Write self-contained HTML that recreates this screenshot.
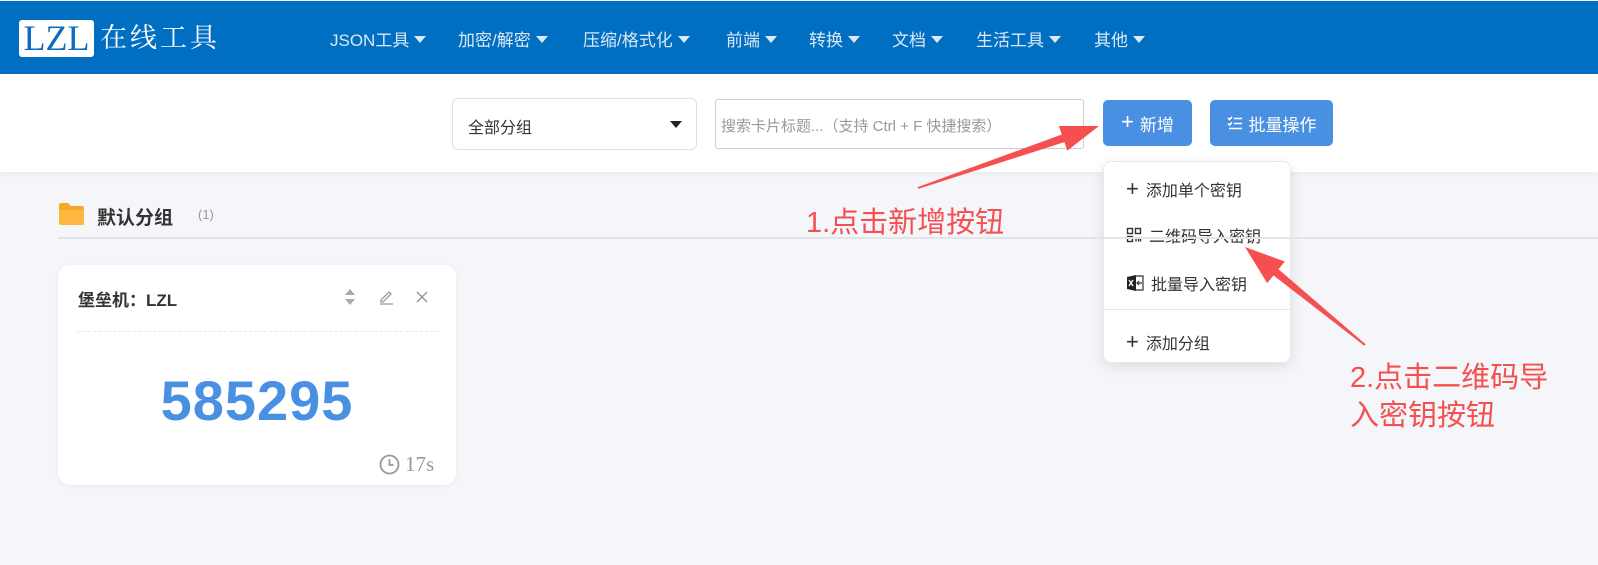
<!DOCTYPE html>
<html><head><meta charset="utf-8"><style>
*{margin:0;padding:0;box-sizing:border-box}
body{width:1598px;height:565px;overflow:hidden;background:#f5f6fa;font-family:"Liberation Sans","Noto Sans CJK SC",sans-serif;position:relative}
.abs{position:absolute}
.hdr{left:0;top:1px;width:1598px;height:73px;background:#006fc1}
.nav{top:26px;font-size:17px;color:#dce8f6;white-space:nowrap}
.nav i{display:inline-block;width:0;height:0;border-left:6px solid transparent;border-right:6px solid transparent;border-top:7px solid #dce8f6;margin-left:5px;vertical-align:3px}
.bar{left:0;top:74px;width:1598px;height:98px;background:#fff;box-shadow:0 2px 6px rgba(0,0,0,.05)}
.btn{background:#4a90e2;color:#fff;border-radius:5px;font-size:17px;display:flex;align-items:center;justify-content:center;gap:6px}
.dd{left:1103px;top:161px;width:188px;height:202px;background:#fff;border-radius:8px;box-shadow:0 4px 14px rgba(0,0,0,.1);border:1px solid #e8e8ec}
.it{left:22px;font-size:16px;color:#333;display:flex;align-items:center;gap:7px;white-space:nowrap}
.red{color:#f5504f;font-size:29px;white-space:nowrap}
</style></head><body>
<div class="abs hdr"></div>
<div class="abs" style="left:19px;top:20px;width:75px;height:37px;background:#fff;border-radius:3px;color:#0a6cbf;font:36px/37px 'Liberation Serif',serif;text-align:center">LZL</div>
<div class="abs" style="left:100px;top:22px;color:#fff;font:27px/32px 'Liberation Serif','Noto Serif CJK SC',serif;letter-spacing:3px">在线工具</div>
<div class="abs nav" style="left:330px">JSON工具<i></i></div>
<div class="abs nav" style="left:458px">加密/解密<i></i></div>
<div class="abs nav" style="left:583px">压缩/格式化<i></i></div>
<div class="abs nav" style="left:726px">前端<i></i></div>
<div class="abs nav" style="left:809px">转换<i></i></div>
<div class="abs nav" style="left:892px">文档<i></i></div>
<div class="abs nav" style="left:976px">生活工具<i></i></div>
<div class="abs nav" style="left:1094px">其他<i></i></div>

<div class="abs bar"></div>
<div class="abs" style="left:452px;top:98px;width:245px;height:52px;border:1px solid #e0e0e0;border-radius:6px;background:#fff;font-size:16px;color:#333;padding:15px 0 0 15px">全部分组
<span class="abs" style="right:14px;top:22px;width:0;height:0;border-left:6px solid transparent;border-right:6px solid transparent;border-top:7px solid #222"></span></div>
<div class="abs" style="left:715px;top:99px;width:369px;height:50px;border:1px solid #ccc;border-radius:3px;background:#fff;font-size:15px;color:#999;padding:15px 0 0 5px;white-space:nowrap">搜索卡片标题...（支持 Ctrl + F 快捷搜索）</div>
<div class="abs btn" style="left:1103px;top:100px;width:89px;height:46px"><span style="font-size:22px;font-weight:300;margin-top:-2px">+</span>新增</div>
<div class="abs btn" style="left:1210px;top:100px;width:123px;height:46px"><svg width="16" height="16" viewBox="0 0 16 16" fill="none" stroke="#fff" stroke-width="1.6"><path d="M1 3l1.5 1.5L5 2M1 8.5l1.5 1.5L5 7.5M7 3.5h8M7 8.5h8M2 13.5h13"/></svg>批量操作</div>

<div class="abs dd">
<div class="abs it" style="top:14px"><span style="font-size:22px;font-weight:300">+</span>添加单个密钥</div>
<div class="abs it" style="top:61px"><svg width="16" height="16" viewBox="0 0 16 16" fill="none" stroke="#333" stroke-width="1.4"><rect x="1.5" y="1.5" width="5" height="5"/><rect x="9.5" y="1.5" width="5" height="5"/><rect x="1.5" y="9.5" width="5" height="5"/><path d="M10 10v4.5M12.5 10v4.5M14.5 10v4.5"/></svg>二维码导入密钥</div>
<div class="abs it" style="top:109px"><svg width="18" height="18" viewBox="0 0 18 18"><path d="M1 3l9-2v16l-9-2z" fill="#222"/><path d="M3 6l4 6M7 6l-4 6" stroke="#fff" stroke-width="1.3"/><path d="M10 2h7v14h-7" fill="none" stroke="#333" stroke-width="1.2"/><path d="M16 9h-5M13 7l-2 2 2 2" fill="none" stroke="#333" stroke-width="1.2"/></svg>批量导入密钥</div>
<div class="abs" style="left:0;top:147px;width:186px;height:1px;background:#e6e6e9"></div>
<div class="abs it" style="top:167px"><span style="font-size:22px;font-weight:300">+</span>添加分组</div>
</div>

<svg class="abs" style="left:58px;top:202px" width="27" height="24" viewBox="0 0 27 24"><path d="M1 3a2 2 0 0 1 2-2h7l3 3h11a2 2 0 0 1 2 2v15a2 2 0 0 1-2 2H3a2 2 0 0 1-2-2z" fill="#f9a825"/><path d="M1 8h25v13a2 2 0 0 1-2 2H3a2 2 0 0 1-2-2z" fill="#ffb73f"/></svg>
<div class="abs" style="left:97px;top:203px;font-size:19px;font-weight:bold;color:#333">默认分组</div>
<div class="abs" style="left:198px;top:207px;font-size:13px;color:#999">(1)</div>
<div class="abs" style="left:58px;top:237px;width:1540px;height:2px;background:#e3e4e8"></div>

<div class="abs" style="left:58px;top:265px;width:398px;height:220px;background:#fff;border-radius:12px;box-shadow:0 1px 6px rgba(0,0,0,.05)"></div>
<div class="abs" style="left:78px;top:286px;font-size:17px;font-weight:bold;color:#333">堡垒机：LZL</div>
<svg class="abs" style="left:343px;top:288px" width="14" height="18" viewBox="0 0 14 18"><path d="M7 1l5 6H2zM7 17l5-6H2z" fill="#aaa"/></svg>
<svg class="abs" style="left:378px;top:288px" width="18" height="18" viewBox="0 0 18 18" fill="none" stroke="#999" stroke-width="1.3"><path d="M3 12l8-8 2 2-8 8H3zM2 16h13"/></svg>
<svg class="abs" style="left:415px;top:290px" width="14" height="14" viewBox="0 0 14 14" stroke="#999" stroke-width="1.5"><path d="M2 2l10 10M12 2L2 12"/></svg>
<div class="abs" style="left:78px;top:331px;width:360px;border-top:1px dashed #e8e8e8"></div>
<div class="abs" style="left:58px;top:368px;width:398px;text-align:center;font-size:56px;font-weight:bold;color:#4a90e2;letter-spacing:1px">585295</div>
<svg class="abs" style="left:379px;top:454px" width="21" height="21" viewBox="0 0 21 21" fill="none" stroke="#999" stroke-width="1.8"><circle cx="10.5" cy="10.5" r="9"/><path d="M10.5 5v6h4"/></svg>
<div class="abs" style="left:405px;top:452px;font:21px 'Liberation Serif',serif;color:#999">17s</div>

<div class="abs red" style="left:806px;top:199px">1.点击新增按钮</div>
<div class="abs red" style="left:1350px;top:354px">2.点击二维码导</div>
<div class="abs red" style="left:1350px;top:392px">入密钥按钮</div>
<svg class="abs" style="left:0;top:0" width="1598" height="565">
<polygon points="1099,126 1067.3,150.6 1064.4,142.1 918.3,188.9 917.7,187.1 1061.8,134.5 1058.9,126" fill="#f5504f"/>
<polygon points="1245,247 1284.8,261.5 1278.5,269.2 1365.6,344.2 1364.4,345.8 1273.5,275.4 1267.2,283.1" fill="#f5504f"/>
</svg>
</body></html>
